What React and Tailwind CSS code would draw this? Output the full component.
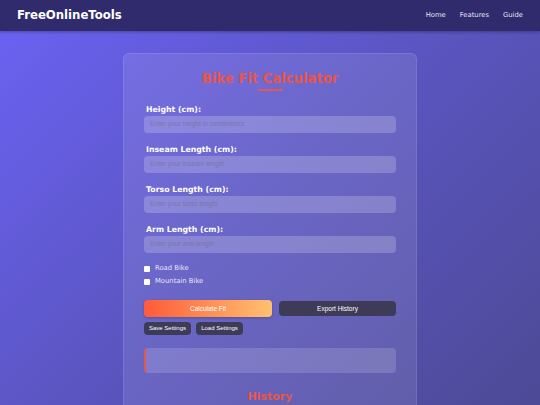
export default function App() {
  const fields = [
    ["Height (cm):", "Enter your height in centimeters"],
    ["Inseam Length (cm):", "Enter your inseam length"],
    ["Torso Length (cm):", "Enter your torso length"],
    ["Arm Length (cm):", "Enter your arm length"],
  ];
  return (
    <div className="w-[540px] h-[405px] overflow-hidden bg-[linear-gradient(135deg,#6c62f5_0%,#5a55c0_50%,#4d4a96_100%)] font-['DejaVu_Sans',sans-serif]">
      <header className="h-[31px] bg-[#2f2b6c] flex items-center justify-between pl-[17px] pr-[17px] shadow-[0_1px_3px_rgba(0,0,0,0.3)]">
        <div className="text-white font-bold text-[11.7px]">FreeOnlineTools</div>
        <nav className="flex gap-[14px] text-[6.8px] text-[#e4e4f4]">
          <span>Home</span>
          <span>Features</span>
          <span>Guide</span>
        </nav>
      </header>
      <div className="flex justify-center pt-[22px]">
        <div className="w-[294px] h-[400px] rounded-[6px] bg-white/10 border border-white/10 pt-[16px] px-[20px]">
          <h1 className="text-center text-[#e8564a] font-bold text-[13.2px] leading-[18px]">Bike Fit Calculator</h1>
          <div className="mx-auto mt-[1px] w-[25px] h-[2px] bg-[#e8564a] rounded"></div>
          <div className="mt-[14px] flex flex-col gap-[12px]">
            {fields.map(([l, p]) => (
              <div key={l} className="flex flex-col">
                <label className="text-white font-bold text-[7.8px] leading-[10px] pl-[2px]">{l}</label>
                <div className="mt-[1px] h-[17px] rounded-[4px] bg-white/20 flex items-center pl-[6px] text-[6.7px] text-[#7a77ab] font-['Liberation_Sans',sans-serif]">{p}</div>
              </div>
            ))}
          </div>
          <div className="mt-[10px] flex flex-col gap-[2px] text-[6.8px] leading-[11px] text-[#e6e4f6]">
            <div className="flex items-center gap-[5px]"><span className="w-[6px] h-[6px] bg-white rounded-[1px]"></span>Road Bike</div>
            <div className="flex items-center gap-[5px]"><span className="w-[6px] h-[6px] bg-white rounded-[1px]"></span>Mountain Bike</div>
          </div>
          <div className="mt-[13px] flex gap-[7px] items-center font-['Liberation_Sans',sans-serif] text-[6.5px] text-white">
            <div className="w-[128px] h-[17px] rounded-[4px] bg-[linear-gradient(90deg,#ff5b3a,#ffc170)] flex items-center justify-center shadow-[0_1px_3px_rgba(0,0,0,0.2)]">Calculate Fit</div>
            <div className="flex-1 h-[15px] rounded-[4px] bg-[#3d3b58] flex items-center justify-center">Export History</div>
          </div>
          <div className="mt-[5px] flex gap-[5px] font-['Liberation_Sans',sans-serif] text-[6px] text-white">
            <div className="w-[47px] h-[13px] rounded-[4px] bg-[#3d3b58] flex items-center justify-center">Save Settings</div>
            <div className="w-[47px] h-[13px] rounded-[4px] bg-[#3d3b58] flex items-center justify-center">Load Settings</div>
          </div>
          <div className="mt-[13px] h-[25px] rounded-[4px] bg-white/15 border-l-2 border-[#e8564a]"></div>
          <h2 className="mt-[17px] text-center text-[#e8564a] font-bold text-[11px] leading-[14px]">History</h2>
        </div>
      </div>
    </div>
  );
}
